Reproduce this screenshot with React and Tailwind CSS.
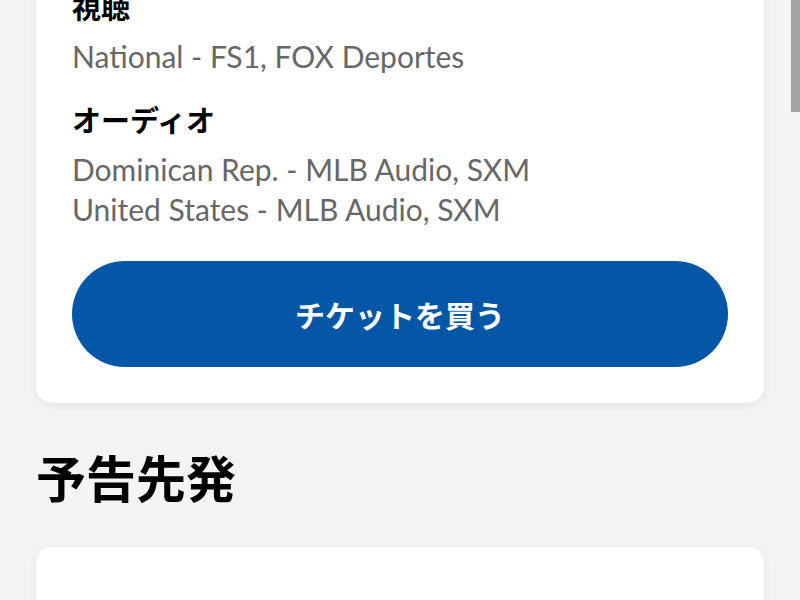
import React from 'react';

const jp = { fontFamily: '"Noto Sans CJK JP", "Noto Sans", sans-serif' };
const body = { fontFamily: 'Lato, "Noto Sans CJK JP", sans-serif' };

const Section = ({ title, lines }) => (
  <div className="flex flex-col">
    <h3 className="text-[29px] leading-[31px] font-bold text-black" style={jp}>
      {title}
    </h3>
    <div className="mt-[14px] flex flex-col">
      {lines.map((line) => (
        <p key={line} className="text-[30px] leading-[40px] text-[#676767]" style={body}>
          {line}
        </p>
      ))}
    </div>
  </div>
);

export default function App() {
  return (
    <div className="relative min-h-[600px] w-full overflow-hidden bg-[#f4f4f4]">
      <div className="px-9">
        <div className="-mt-[45px] rounded-2xl bg-white px-9 pt-9 pb-9 shadow-[0_2px_8px_rgba(0,0,0,0.08)]">
          <div className="flex flex-col gap-[28px]">
            <Section title="視聴" lines={['National - FS1, FOX Deportes']} />
            <Section
              title="オーディオ"
              lines={['Dominican Rep. - MLB Audio, SXM', 'United States - MLB Audio, SXM']}
            />
          </div>
          <button
            className="mt-[32px] flex h-[106px] w-full items-center justify-center rounded-full bg-[#0457a7] text-[30px] font-bold text-white"
            style={jp}
          >
            チケットを買う
          </button>
        </div>

        <h2 className="mt-[44px] text-[50px] leading-[58px] font-bold text-black" style={jp}>
          予告先発
        </h2>

        <div className="mt-[42px] h-[120px] rounded-2xl bg-white shadow-[0_2px_8px_rgba(0,0,0,0.08)]" />
      </div>

      <div className="absolute right-0 top-0 h-[112px] w-[9px] bg-[#a3a3a3]" />
    </div>
  );
}
